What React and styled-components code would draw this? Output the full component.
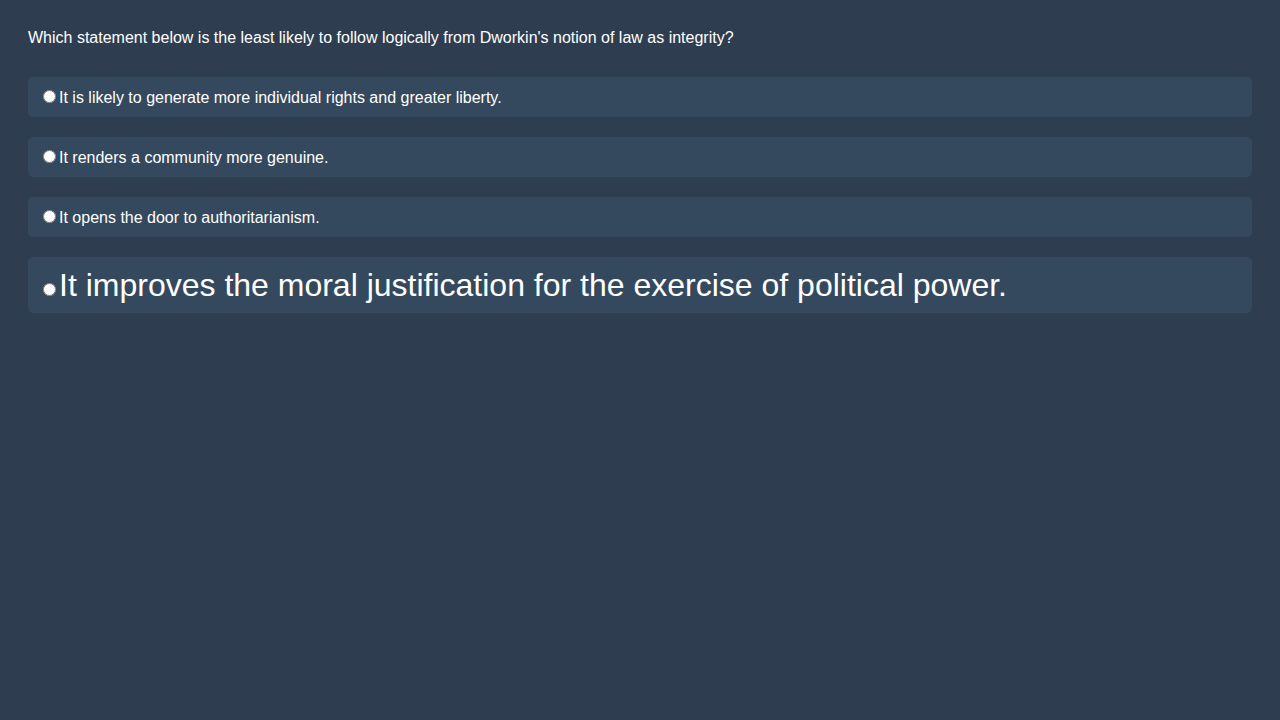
import React from "react";
import styled, { createGlobalStyle } from "styled-components";

const Global = createGlobalStyle`
  html, body { background: #2e3e50; }
  body {
    margin: 8px;
    font-family: "Liberation Sans", Arial, sans-serif;
    color: #ffffff;
  }
`;

const Page = styled.div`
  padding: 20px;
  display: flex;
  flex-direction: column;
`;

const Question = styled.div`
  font-size: 16px;
  line-height: 20px;
  margin-bottom: 29px;
`;

const Options = styled.div`
  display: flex;
  flex-direction: column;
  gap: 20px;
`;

const Option = styled.label`
  display: block;
  background: #34495e;
  border-radius: 5px;
  padding: 10px;
  font-size: ${(p) => (p.$big ? "32px" : "16px")};
  line-height: ${(p) => (p.$big ? "36px" : "19px")};
  cursor: pointer;
`;

const Radio = styled.input`
  margin: 3px 3px 0 5px;
  width: 13px;
  height: 13px;
  vertical-align: baseline;
`;

const options = [
  "It is likely to generate more individual rights and greater liberty.",
  "It renders a community more genuine.",
  "It opens the door to authoritarianism.",
  "It improves the moral justification for the exercise of political power.",
];

export default function App() {
  return (
    <>
      <Global />
      <Page>
        <Question>
          Which statement below is the least likely to follow logically from Dworkin's notion of law as integrity?
        </Question>
        <Options>
          {options.map((o, i) => (
            <Option key={i} $big={i === 3}>
              <Radio type="radio" name="q" />
              {o}
            </Option>
          ))}
        </Options>
      </Page>
    </>
  );
}
